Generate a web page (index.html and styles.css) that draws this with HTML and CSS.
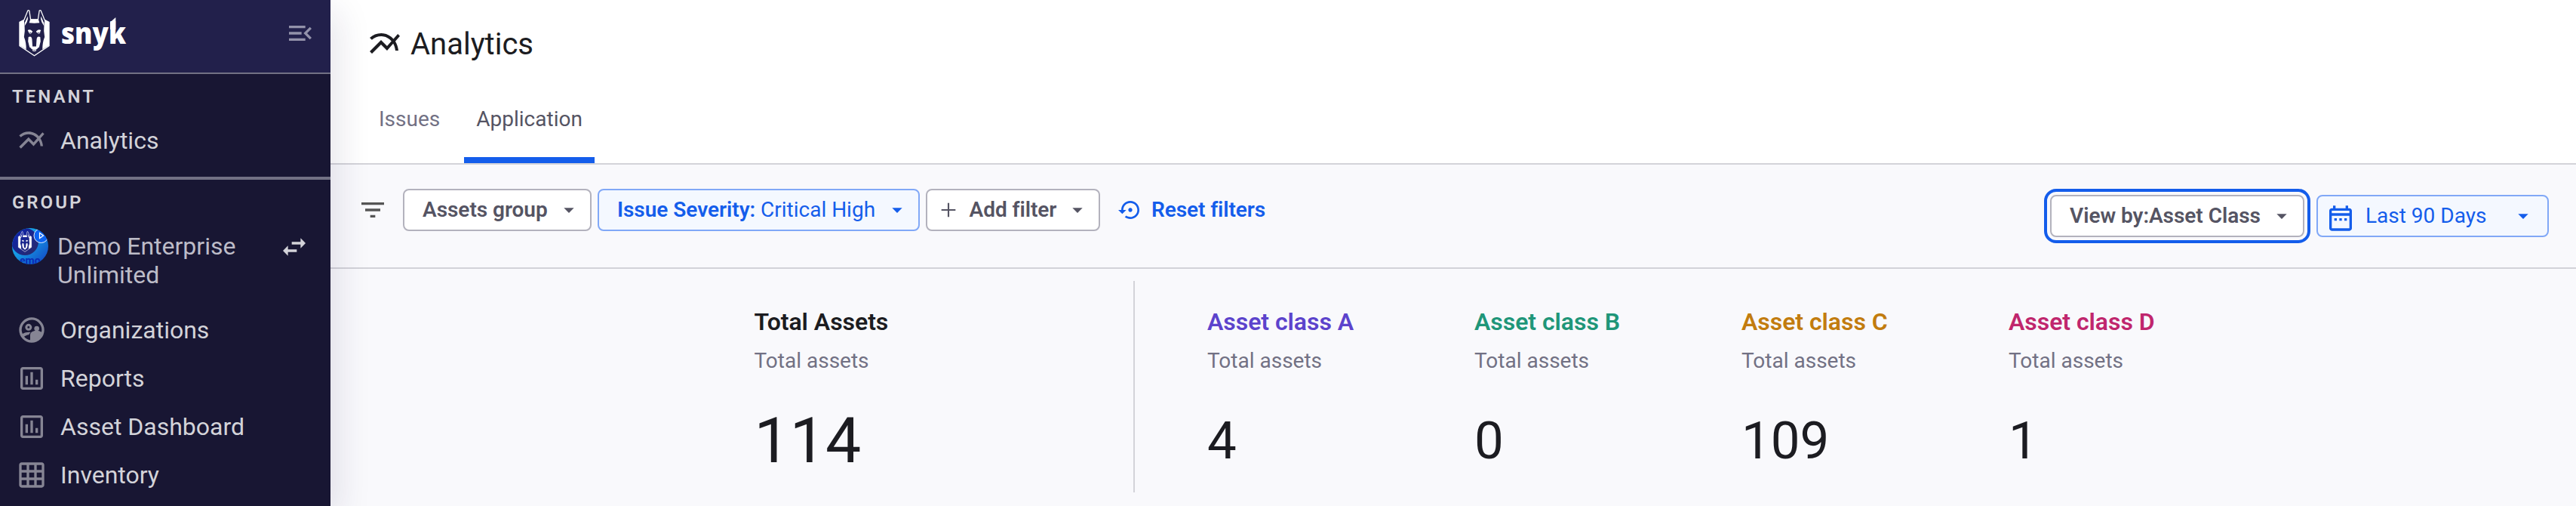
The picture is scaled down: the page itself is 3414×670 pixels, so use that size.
FILE: index.html
```html
<!DOCTYPE html>
<html lang="en">
<head>
<meta charset="utf-8">
<title>Analytics</title>
<link rel="stylesheet" href="styles.css">
</head>
<body>
<svg class="defs" width="0" height="0">
  <symbol id="multiline" viewBox="0 0 24 24"><path d="M22 6.92l-1.41-1.41-2.85 3.21C15.68 6.4 12.83 5 9.61 5 6.72 5 4.07 6.16 2 8l1.42 1.42C5.12 7.93 7.27 7 9.61 7c2.74 0 5.09 1.26 6.77 3.24l-2.88 3.24-4-4L2 16.99l1.5 1.5 6-6.01 4 4 4.05-4.55c.75 1.35 1.25 2.9 1.44 4.55H21c-.22-2.3-.95-4.39-2.04-6.14L22 6.92z"/></symbol>
  <symbol id="caret" viewBox="0 0 24 24"><path d="M7 10l5 5 5-5z"/></symbol>
  <symbol id="chart" viewBox="0 0 24 24"><path d="M7 10h2v7H7zM11 7h2v10h-2zM15 13h2v4h-2zM19 3H5c-1.1 0-2 .9-2 2v14c0 1.1.9 2 2 2h14c1.100 0 2-.9 2-2V5c0-1.100-.9-2-2-2zm0 16H5V5h14v14z"/></symbol>
  <symbol id="dog" viewBox="0 0 42 64">
    <path d="M1 17L7 14 12 1.500Q13 .2 14.200 1.500L16 13.500H26L27.800 1.500Q29 .2 30 1.500L35 14 41 17V49L21 62.500 1 49Z" fill="none" stroke="#fff" stroke-width="1.300"/>
    <path d="M1 17L7 14Q8 23 8 29L7 37Q10 44 10 54L1 48.500ZM41 17L35 14Q34 23 34 29L35 37Q32 44 32 54L41 48.500ZM15.500 13H26.500L28 18Q21 19 14 18ZM8 18L12 9Q13 13 11 17L8 22ZM34 18L30 9Q29 13 31 17L34 22Z" fill="#fff"/>
    <path d="M13 37Q18 35 18 42L18.500 50H23.500L24 42Q24 35 29 37L29.500 43 27.500 51Q24 54 21 54 18 54 14.500 51L12.500 43ZM12 28Q15 25.500 18.500 29.500L18 31H13.500ZM30 28Q27 25.500 23.500 29.500L24 31H28.500Z" fill="#fff"/>
    <circle cx="15.500" cy="31" r="1.500" fill="none" stroke="#fff" stroke-width=".8"/><circle cx="27" cy="31" r="1.500" fill="none" stroke="#fff" stroke-width=".8"/>
    <path d="M17 52.500Q21 55.500 25 52.500M18.500 55Q21 57 23.500 55" fill="none" stroke="#fff" stroke-width="1.200"/>
  </symbol>
</svg>
<div class="app">
  <aside class="sidebar">
    <div class="brand">
      <svg class="logo-mark"><use href="#dog"/></svg>
      <svg class="logo-word" viewBox="0 0 96 70"><text x="0" y="45.500" textLength="86" lengthAdjust="spacingAndGlyphs">snyk</text><path d="M65 27V17.500L72.300 11V27Z"/></svg>
      <svg class="icon menu" viewBox="0 0 24 24"><path d="M3 18h13v-2H3v2zM3 6v2h13V6H3zm0 7h10v-2H3v2zM21 15.590L17.420 12 21 8.410 19.590 7l-5 5 5 5L21 15.590z"/></svg>
    </div>
    <section class="section tenant">
      <h2 class="section-title">TENANT</h2>
      <a class="nav-item"><svg class="icon"><use href="#multiline"/></svg>Analytics</a>
    </section>
    <section class="section">
      <h2 class="section-title">GROUP</h2>
      <div class="group-row">
        <svg class="avatar" viewBox="0 0 48 48">
          <defs>
            <clipPath id="round"><circle cx="24" cy="24" r="24"/></clipPath>
            <linearGradient id="sky" x1="0" y1="0" x2="1" y2="1"><stop offset="0" stop-color="#19b5f0"/><stop offset=".45" stop-color="#1596e2"/><stop offset="1" stop-color="#1240c4"/></linearGradient>
            <linearGradient id="deep" x1="0" y1="0" x2="1" y2="1"><stop offset="0" stop-color="#0a23b4"/><stop offset="1" stop-color="#2a2a66"/></linearGradient>
          </defs>
          <g clip-path="url(#round)">
            <rect width="48" height="48" fill="url(#sky)"/>
            <circle cx="17" cy="18" r="18" fill="url(#deep)"/>
            <use href="#dog" x="7.500" y="4" width="19" height="28"/>
            <circle cx="38.500" cy="10" r="9.500" fill="#0c63f2" stroke="#fff" stroke-width=".9"/>
            <path d="M36.500 6.500V13.500L41.500 10Z" fill="none" stroke="#fff" stroke-width="1.200"/>
            <text class="avatar-text" x="10" y="47.500">emo</text>
          </g>
        </svg>
        <div class="group-name">Demo Enterprise Unlimited</div>
        <svg class="icon swap" viewBox="0 0 24 24"><path d="M6.990 11L3 15l3.990 4v-3H14v-2H6.990v-3zM21 9l-3.990-4v3H10v2h7.010v3L21 9z"/></svg>
      </div>
      <a class="nav-item"><svg class="icon" viewBox="0 0 24 24"><path d="M12 2a10 10 0 1 0 0 20 10 10 0 0 0 0-20zM4 12a8 8 0 1 1 15.800 1.700c-1-.8-2.600-1.200-3.800-1.200-1.900 0-5.200 1-5.200 3.400v4A8 8 0 0 1 6 17.200c.8-.7 2.200-1.300 3.800-1.500.2-.7.800-1.400 1.400-1.900-.5-.1-1-.1-1.500-.1-1.600 0-3.500.5-4.900 1.300A8 8 0 0 1 4 12z"/><path d="M9.500 7.100a2.700 2.700 0 1 0 0 5.400 2.700 2.700 0 0 0 0-5.400zm0 1.800a.9.9 0 1 1 0 1.800.9.9 0 0 1 0-1.800z"/><circle cx="16" cy="10.800" r="2"/><path d="M12 21v-5c0-1.700 2.500-2.400 4-2.400s3.500.6 4 1.500L18 20z"/></svg>Organizations</a>
      <a class="nav-item"><svg class="icon"><use href="#chart"/></svg>Reports</a>
      <a class="nav-item"><svg class="icon"><use href="#chart"/></svg>Asset Dashboard</a>
      <a class="nav-item"><svg class="icon" viewBox="0 0 24 24"><path d="M20 2H4c-1.100 0-2 .9-2 2v16c0 1.100.9 2 2 2h16c1.100 0 2-.9 2-2V4c0-1.100-.9-2-2-2zM8 20H4v-4h4v4zm0-6H4v-4h4v4zm0-6H4V4h4v4zm6 12h-4v-4h4v4zm0-6h-4v-4h4v4zm0-6h-4V4h4v4zm6 12h-4v-4h4v4zm0-6h-4v-4h4v4zm0-6h-4V4h4v4z"/></svg>Inventory</a>
    </section>
  </aside>
  <main class="main">
    <header class="header">
      <h1 class="title"><svg class="title-icon"><use href="#multiline"/></svg>Analytics</h1>
      <nav class="tabs"><a class="tab">Issues</a><a class="tab active">Application</a></nav>
    </header>
    <div class="filters">
      <svg class="icon filter-icon" viewBox="0 0 24 24"><path d="M10 18h4v-2h-4v2zM3 6v2h18V6H3zm3 7h12v-2H6v2z"/></svg>
      <button class="btn assets">Assets group<svg class="small"><use href="#caret"/></svg></button>
      <button class="btn blue severity"><span>Issue Severity: <span class="value">Critical High</span></span><svg class="small"><use href="#caret"/></svg></button>
      <button class="btn add"><svg class="small" viewBox="0 0 24 24"><path d="M19 12.800h-6.200V19h-1.600v-6.200H5v-1.600h6.200V5h1.600v6.200H19z"/></svg><span>Add filter</span><svg class="small"><use href="#caret"/></svg></button>
      <button class="reset"><svg class="small" viewBox="0 0 24 24"><path d="M14 12c0-1.100-.9-2-2-2s-2 .9-2 2 .9 2 2 2 2-.9 2-2zm-2-9c-4.970 0-9 4.030-9 9H0l4 4 4-4H5c0-3.870 3.130-7 7-7s7 3.130 7 7-3.130 7-7 7c-1.510 0-2.910-.49-4.060-1.300l-1.420 1.440C8.040 20.300 9.940 21 12 21c4.970 0 9-4.030 9-9s-4.030-9-9-9z"/></svg>Reset filters</button>
      <div class="right">
        <button class="btn viewby focused">View by:Asset Class<svg class="small"><use href="#caret"/></svg></button>
        <button class="btn blue date"><svg class="icon cal" viewBox="0 0 24 24"><path d="M7 12h2v2H7zM11 12h2v2h-2zM15 12h2v2h-2zM19 4h-1V2h-2v2H8V2H6v2H5c-1.110 0-1.990.9-1.990 2L3 20c0 1.100.89 2 2 2h14c1.100 0 2-.9 2-2V6c0-1.100-.9-2-2-2zm0 16H5V10h14v10zm0-12H5V6h14v2z"/></svg><span class="value">Last 90 Days</span><svg class="small"><use href="#caret"/></svg></button>
      </div>
    </div>
    <div class="stats">
      <div class="stat total"><h3>Total Assets</h3><p>Total assets</p><strong>114</strong></div>
      <div class="classes">
        <div class="stat a"><h3>Asset class A</h3><p>Total assets</p><strong>4</strong></div>
        <div class="stat b"><h3>Asset class B</h3><p>Total assets</p><strong>0</strong></div>
        <div class="stat c"><h3>Asset class C</h3><p>Total assets</p><strong>109</strong></div>
        <div class="stat d"><h3>Asset class D</h3><p>Total assets</p><strong>1</strong></div>
      </div>
    </div>
  </main>
</div>
</body>
</html>
```
FILE: styles.css
```css
* { box-sizing: border-box; }
body { margin: 0; font-family: Roboto, "Liberation Sans", sans-serif; overflow: hidden; }
h1, h2, h3, p { margin: 0; font-weight: 400; }
button { font: inherit; cursor: pointer; }
svg { flex: none; fill: currentColor; }
.defs { position: absolute; }
.app { display: flex; width: 3414px; height: 670px; overflow: hidden; }
.icon { width: 40px; height: 40px; }
.small { width: 32px; height: 32px; }

.sidebar { width: 438px; flex: none; background: #181633; color: #d3d3d9; position: relative; z-index: 1; box-shadow: 8px 16px 44px rgba(30, 28, 70, .12); }
.brand { height: 98px; display: flex; align-items: flex-start; background: #22204b; border-bottom: 2px solid #727184; padding-left: 25px; }
.logo-mark { width: 41px; height: 64px; margin-top: 12px; }
.logo-word { width: 96px; height: 70px; margin: 12px 0 0 15px; overflow: visible; color: #fff; font: 800 39px "Open Sans", sans-serif; }
.menu { margin: 24px 20px 0 auto; color: #9392aa; }
.section { padding-top: 16px; }
.tenant { height: 140px; border-bottom: 4px solid #727184; }
.section-title { height: 28px; padding-left: 16px; font-size: 24px; line-height: 28px; font-weight: 600; letter-spacing: 3px; }
.tenant .nav-item { margin-top: 12px; }
.nav-item { display: flex; align-items: center; height: 64px; padding-left: 22px; gap: 18px; font-size: 32px; }
.nav-item .icon { color: #868594; }
.group-row { display: flex; align-items: flex-start; height: 103px; margin-top: 20px; padding-left: 16px; }
.avatar { width: 48px; height: 48px; }
.avatar-text { font: 700 14px Roboto, sans-serif; fill: #0a2bb5; }
.group-name { width: 260px; margin: 6px 0 0 12px; font-size: 32px; line-height: 37.6px; color: #bdbcc8; }
.swap { margin: 5px 0 0 34px; }

.main { flex: 1; background: #f9f9fc; color: #1c1c21; }
.header { height: 218px; background: #fff; border-bottom: 2px solid #d3d3d9; }
.title { display: flex; align-items: center; height: 116px; padding-left: 48px; gap: 10px; font-size: 40px; }
.title-icon { width: 48px; height: 48px; }
.tabs { display: flex; gap: 16px; height: 100px; padding-left: 48px; font-size: 28px; line-height: 84px; color: #727184; }
.tab { padding: 0 16px; }
.active { color: #555463; border-bottom: 8px solid #145deb; }

.filters { display: flex; align-items: flex-start; height: 138px; padding: 32px 36px 0; border-bottom: 2px solid #d3d3d9; }
.filter-icon { margin: 8px 20px 0 0; color: #555; }
.btn { display: flex; align-items: center; justify-content: space-between; height: 56px; margin-right: 8px; padding: 0 12px 1px 24px; border: 2px solid #b3b2bd; border-radius: 8px; background: #fff; color: #555463; font-size: 28px; font-weight: 600; letter-spacing: -.04px; white-space: nowrap; }
.blue { border-color: #81a8f7; background: #f4f8ff; color: #145deb; }
.value { font-weight: 400; letter-spacing: 0; }
.assets { width: 250px; }
.severity { width: 427px; }
.add { width: 231px; padding-left: 12px; }
.reset { display: flex; align-items: center; gap: 12px; height: 56px; margin-left: 16px; padding: 0 0 1px; border: 0; background: none; color: #145deb; font-size: 28px; font-weight: 600; letter-spacing: -.08px; }
.right { display: flex; margin: 8px 0 0 auto; gap: 16px; }
.right .btn { margin: 0; }
.viewby { width: 337px; }
.focused { outline: 4px solid #145deb; outline-offset: 4px; }
.date { width: 308px; padding-left: 10px; }
.cal { margin-top: 6px; }
.date .value { margin: 0 auto 0 13px; }
.date .small { margin-right: 4px; }

.stats { display: flex; padding: 16px 0 0 561.5px; }
.stat h3 { height: 40px; margin-top: 34px; font-size: 32px; line-height: 40px; font-weight: 600; letter-spacing: -.04px; white-space: nowrap; }
.stat p { margin-top: 12px; font-size: 28px; line-height: 40px; color: #727184; }
.stat strong { display: block; height: 110px; margin-top: 31px; font-size: 69px; line-height: 110px; font-weight: 400; }
.total { width: 502.5px; }
.total strong { font-size: 84px; }
.classes { display: flex; height: 280px; padding-left: 96px; border-left: 2px solid #d3d3d9; }
.classes .stat { width: 354px; }
.a h3 { color: #5c43cc; }
.b h3 { color: #1f9679; }
.c h3 { color: #c27c0e; }
.d h3 { color: #c0266d; }
```
